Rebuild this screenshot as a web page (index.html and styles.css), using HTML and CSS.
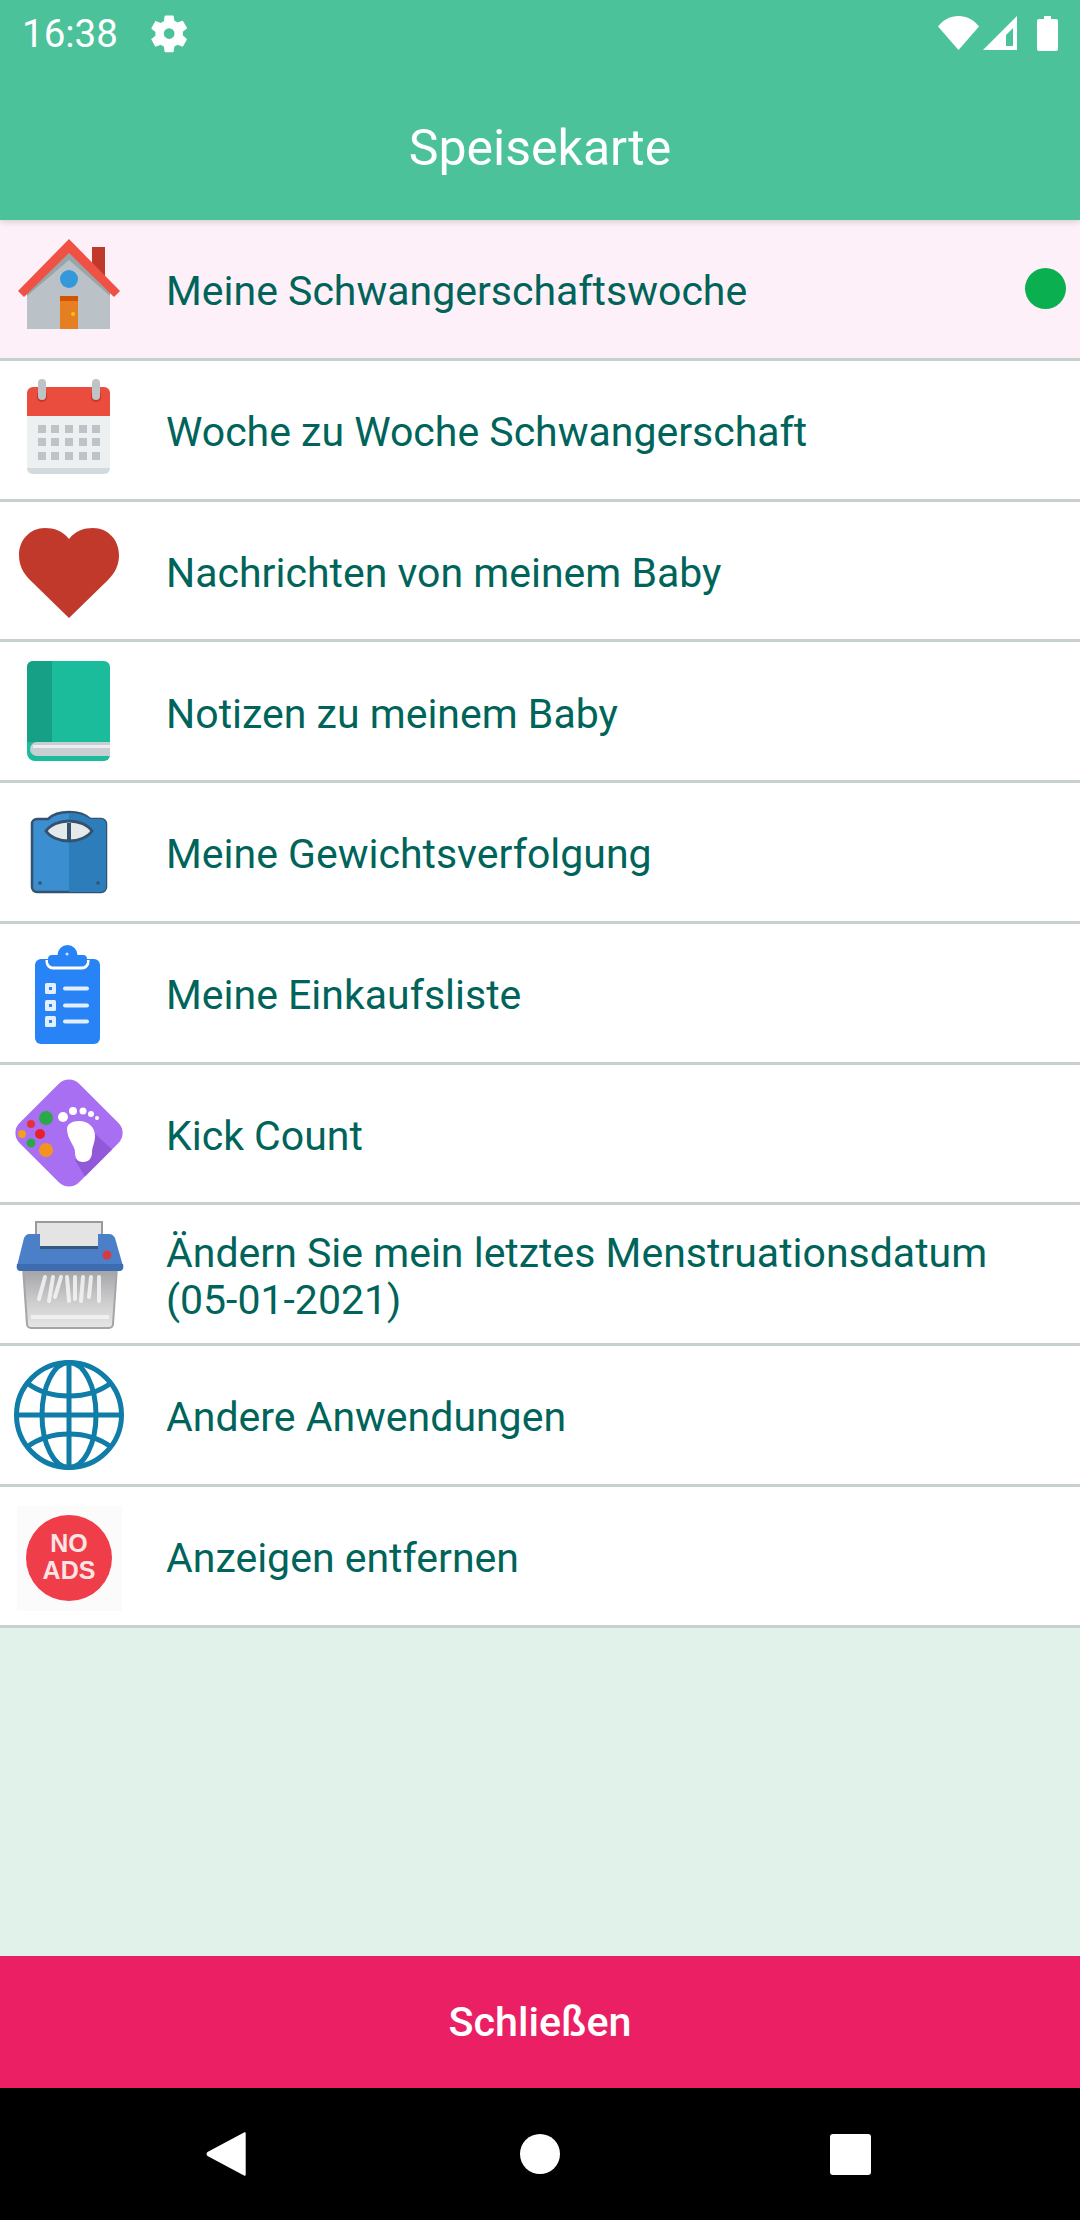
FILE: index.html
```html
<!DOCTYPE html>
<html lang="de">
<head>
<meta charset="utf-8">
<title>Speisekarte</title>
<link rel="stylesheet" href="styles.css">
</head>
<body>
<div class="screen">
  <header class="appbar">
    <div class="status">
      <div class="status-left">
        <span class="clock">16:38</span>
        <svg class="gear" viewBox="0 0 24 24"><path fill="#fff" fill-rule="evenodd" d="M19.400 13c.04-.3.06-.65.06-1s-.02-.7-.07-1l2.160-1.700c.2-.15.25-.42.12-.64l-2.050-3.550c-.12-.22-.38-.3-.62-.22l-2.550 1.030c-.53-.4-1.100-.74-1.730-1l-.38-2.700A.5.5 0 0 0 13.840 2H9.760a.5.5 0 0 0-.5.42l-.38 2.700c-.63.26-1.200.6-1.730 1L4.600 5.100c-.24-.08-.5 0-.62.22L1.930 8.870c-.13.22-.07.49.12.64L4.200 11.200c-.05.3-.08.66-.08 1s.02.7.07 1l-2.160 1.700c-.2.15-.25.42-.12.64l2.050 3.550c.12.22.38.3.62.22l2.550-1.030c.53.4 1.100.74 1.730 1l.38 2.700c.05.25.25.42.5.42h4.080c.25 0 .46-.17.5-.42l.38-2.700c.63-.26 1.200-.6 1.730-1l2.550 1.030c.24.08.5 0 .62-.22l2.050-3.550c.13-.22.07-.49-.12-.64L19.400 13zM11.800 15a3 3 0 1 1 0-6 3 3 0 0 1 0 6z"/></svg>
      </div>
      <div class="status-right">
        <svg class="wifi" viewBox="0 0 41 34"><path fill="#fff" d="M20.500 34 0 10.500C5 4 12.500 0 20.500 0S36 4 41 10.500z"/></svg>
        <svg class="signal" viewBox="0 0 34 34"><path fill="#fff" fill-rule="evenodd" d="M34 0v34H0zM30 12l-7 7v11h7z"/></svg>
        <svg class="battery" viewBox="0 0 21 35"><path fill="#fff" d="M7 0h7v3h5a2 2 0 0 1 2 2v28a2 2 0 0 1-2 2H2a2 2 0 0 1-2-2V5a2 2 0 0 1 2-2h5z"/></svg>
      </div>
    </div>
    <h1 class="title">Speisekarte</h1>
  </header>

  <ul class="menu">
    <li class="row row-active">
      <svg class="icon" viewBox="0 0 120 120">
        <rect x="83" y="18" width="13" height="32" fill="#c0392b"/>
        <path d="M18 58 60 20l41 38v42H18z" fill="#bac2c8"/>
        <path d="M18 60 60 24l41 36v7L60 31 18 67z" fill="#98a6a9"/>
        <path d="M9 62 60 10l51 52-6 6-45-44-45 44z" fill="#ef5245"/>
        <circle cx="60" cy="50" r="9" fill="#3498db"/>
        <rect x="51" y="67" width="18" height="33" fill="#e67e22"/>
        <rect x="51" y="67" width="18" height="5" fill="#d35400"/>
        <circle cx="64" cy="85" r="2" fill="#f1c40f"/>
      </svg>
      <span class="label">Meine Schwangerschaftswoche</span>
      <span class="dot"></span>
    </li>
    <li class="row">
      <svg class="icon" viewBox="0 0 120 120">
        <path d="M18 44h83v54a6 6 0 0 1-6 6H24a6 6 0 0 1-6-6z" fill="#ecf0f1"/>
        <path d="M18 98h83a6 6 0 0 1-6 6H24a6 6 0 0 1-6-6z" fill="#d3dadd"/>
        <path d="M24 17h71a6 6 0 0 1 6 6v23H18V23a6 6 0 0 1 6-6z" fill="#ea4c3e"/>
        <g fill="#c0392b"><rect x="28" y="20" width="10" height="12" rx="5"/><rect x="82" y="20" width="10" height="12" rx="5"/></g>
        <g fill="#bdc3c7"><rect x="29" y="9" width="8" height="21" rx="4"/><rect x="83" y="9" width="8" height="21" rx="4"/></g>
        <g fill="#bdc3c7">
          <rect x="29" y="55" width="8" height="8"/><rect x="42" y="55" width="8" height="8"/><rect x="56" y="55" width="8" height="8"/><rect x="70" y="55" width="8" height="8"/><rect x="83" y="55" width="8" height="8"/>
          <rect x="29" y="68" width="8" height="8"/><rect x="42" y="68" width="8" height="8"/><rect x="56" y="68" width="8" height="8"/><rect x="70" y="68" width="8" height="8"/><rect x="83" y="68" width="8" height="8"/>
          <rect x="29" y="82" width="8" height="8"/><rect x="42" y="82" width="8" height="8"/><rect x="56" y="82" width="8" height="8"/><rect x="70" y="82" width="8" height="8"/><rect x="83" y="82" width="8" height="8"/>
        </g>
      </svg>
      <span class="label">Woche zu Woche Schwangerschaft</span>
    </li>
    <li class="row">
      <svg class="icon" viewBox="0 0 120 120">
        <path d="M60 29C54 21 45 18 36 18 21 18 10 30 10 45c0 10 4 18 11 25l39 38 39-38c7-7 11-15 11-25 0-15-11-27-26-27-9 0-18 3-24 11z" fill="#c0392b"/>
      </svg>
      <span class="label">Nachrichten von meinem Baby</span>
    </li>
    <li class="row">
      <svg class="icon" viewBox="0 0 120 120">
        <path d="M24 10h71a6 6 0 0 1 6 6v88a6 6 0 0 1-6 6H26a8 8 0 0 1-8-8V16a6 6 0 0 1 6-6z" fill="#1abc9c"/>
        <path d="M24 10h19v81H18V16a6 6 0 0 1 6-6z" fill="#16a085"/>
        <path d="M28 91h73v14H28a7 7 0 0 1 0-14z" fill="#c9ced2"/>
        <path d="M24 94h77v3H24z" fill="#eceff1"/>
      </svg>
      <span class="label">Notizen zu meinem Baby</span>
    </li>
    <li class="row">
      <svg class="icon" viewBox="0 0 120 120">
        <path d="M28 27h11c5-5 13-7 21-7s16 2 21 7h11a5 5 0 0 1 5 5v63a5 5 0 0 1-5 5H28a5 5 0 0 1-5-5V32a5 5 0 0 1 5-5z" fill="#3b8ed0" stroke="#34526e" stroke-width="2.500"/>
        <path d="M60 21c8 0 16 2 21 6h11a5 5 0 0 1 5 5v63a5 5 0 0 1-5 5H60z" fill="#2c7db9"/>
        <path d="M37 39c4-6 13-10 23-10s19 4 23 10c-4 6-13 10-23 10s-19-4-23-10z" fill="#e6e9ea" stroke="#34526e" stroke-width="3"/>
        <rect x="58" y="31" width="4" height="17" fill="#34526e"/>
        <circle cx="31" cy="91" r="1.800" fill="#34526e"/>
        <circle cx="89" cy="91" r="1.800" fill="#34526e"/>
      </svg>
      <span class="label">Meine Gewichtsverfolgung</span>
    </li>
    <li class="row">
      <svg class="icon" viewBox="0 0 120 120">
        <rect x="26" y="26" width="65" height="85" rx="6" fill="#2783f6"/>
        <path d="M38 27v2a6 6 0 0 0 6 6h29a6 6 0 0 0 6-6v-2" fill="none" stroke="#fff" stroke-width="3"/>
        <path d="M41 32a4 4 0 0 1-2-4v-2a4 4 0 0 1 4-4h5.500a10 10 0 0 1 20 0H74a4 4 0 0 1 4 4v2a4 4 0 0 1-2 4z" fill="#2783f6"/>
        <circle cx="58" cy="21" r="1.500" fill="#cfe3fd"/>
        <g fill="#e4effe">
          <rect x="36" y="50" width="11" height="11" rx="1.500"/><rect x="36" y="67" width="11" height="11" rx="1.500"/><rect x="36" y="83" width="11" height="11" rx="1.500"/>
          <rect x="54" y="53.500" width="26" height="4" rx="2"/><rect x="54" y="70.500" width="26" height="4" rx="2"/><rect x="54" y="86.500" width="26" height="4" rx="2"/>
        </g>
        <g fill="#2783f6"><rect x="40" y="54" width="3" height="3"/><rect x="40" y="71" width="3" height="3"/><rect x="40" y="87" width="3" height="3"/></g>
      </svg>
      <span class="label">Meine Einkaufsliste</span>
    </li>
    <li class="row">
      <svg class="icon" viewBox="0 0 120 120">
        <defs>
          <clipPath id="diamond"><rect x="18" y="18" width="84" height="84" rx="14" transform="rotate(45 60 60)"/></clipPath>
        </defs>
        <rect x="18" y="18" width="84" height="84" rx="14" transform="rotate(45 60 60)" fill="#a86ff2"/>
        <path d="M86 61 106 79 78 107 66 87z" fill="#9158d8" clip-path="url(#diamond)"/>
        <g fill="#fff">
          <circle cx="54" cy="44" r="5"/><circle cx="64" cy="38" r="4"/><circle cx="74" cy="38" r="3.500"/><circle cx="82" cy="41" r="3"/><circle cx="88" cy="45" r="2"/>
          <path d="M58 56c0-5 5-8 12-8 9 0 16 6 16 15 0 7-3 11-3 16 0 6-3 10-9 10-6 0-8-4-8-10 0-6-8-13-8-23z"/>
        </g>
        <circle cx="37" cy="45" r="7" fill="#2aa84a"/>
        <circle cx="22" cy="51" r="4" fill="#e8303a"/>
        <circle cx="13" cy="61" r="4" fill="#f2a01e"/>
        <circle cx="31" cy="61" r="5" fill="#e8202a"/>
        <circle cx="22" cy="70" r="4.500" fill="#2aa84a"/>
        <circle cx="37" cy="77" r="7" fill="#f2951e"/>
      </svg>
      <span class="label">Kick Count</span>
    </li>
    <li class="row">
      <svg class="icon" viewBox="0 0 120 120">
        <defs>
          <linearGradient id="bin" x1="0" y1="0" x2="0" y2="1"><stop offset="0" stop-color="#9fa0a3"/><stop offset=".6" stop-color="#cfcfd0"/><stop offset="1" stop-color="#e6e6e6"/></linearGradient>
        </defs>
        <g transform="translate(0 3)">
          <path d="M14 50h94l-4 57a4 4 0 0 1-4 4H22a4 4 0 0 1-4-4z" fill="url(#bin)" stroke="#a3a5a8" stroke-width="2"/>
          <path d="M22 100h78" stroke="#f0f0f0" stroke-width="4"/>
          <g stroke="#f4f4f4" stroke-width="4" fill="none" opacity=".85" stroke-linecap="round">
            <path d="M36 60 30 82M44 60 40 84M52 60 46 80M58 60 60 84M66 60 66 82M74 60 72 84M82 60 80 80M90 60 90 84"/>
          </g>
          <rect x="27" y="5" width="66" height="30" fill="#e4e4e4" stroke="#9a9a9a" stroke-width="2"/>
          <path d="M20 17h11v14h58V17h11c3 0 5 2 6 4l8 28c1 3-1 5-4 5H12c-3 0-5-2-4-5l7-28c1-2 3-4 5-4z" fill="#4b80c9"/>
          <path d="M8 47c-1 4 1 7 4 7h98c3 0 5-3 4-7H8z" fill="#3d6db0"/>
          <rect x="31" y="29" width="58" height="3" fill="#33597f"/>
          <circle cx="98" cy="38" r="4.500" fill="#d93a42"/>
        </g>
      </svg>
      <span class="label">Ändern Sie mein letztes Menstruationsdatum (05-01-2021)</span>
    </li>
    <li class="row">
      <svg class="icon" viewBox="0 0 120 120">
        <g fill="none" stroke="#0f7da8" stroke-width="5">
          <circle cx="60" cy="60" r="52.500"/>
          <ellipse cx="60" cy="60" rx="27" ry="52.500"/>
          <path d="M60 8v104M8 60h104"/>
          <path d="M18 28c12 9 26 13 42 13s30-4 42-13"/>
          <path d="M18 92c12-9 26-13 42-13s30 4 42 13"/>
        </g>
      </svg>
      <span class="label">Andere Anwendungen</span>
    </li>
    <li class="row">
      <svg class="icon" viewBox="0 0 120 120">
        <rect x="8" y="10" width="105" height="105" fill="#fbfbfb"/>
        <circle cx="60" cy="62" r="43" fill="#ef3d49"/>
        <text class="ads-text" x="60" y="56" text-anchor="middle">NO</text>
        <text class="ads-text" x="60" y="83" text-anchor="middle">ADS</text>
      </svg>
      <span class="label">Anzeigen entfernen</span>
    </li>
  </ul>

  <div class="spacer"></div>
  <div class="close">Schließen</div>

  <nav class="navbar">
    <svg class="nav-back" viewBox="0 0 40 46"><path fill="#fff" d="M38 1.500c.8-.6 1.700 0 1.700 1v41c0 1-.9 1.600-1.700 1L1.500 25c-1.300-1-1.300-3 0-4z"/></svg>
    <span class="nav-home"></span>
    <span class="nav-recent"></span>
  </nav>
</div>
</body>
</html>
```
FILE: styles.css
```css
* { box-sizing: border-box; }
html, body { margin: 0; padding: 0; }
body { width: 1080px; height: 2220px; font-family: Roboto, "Noto Sans", sans-serif; overflow: hidden; }
.screen { width: 1080px; height: 2220px; display: flex; flex-direction: column; background: #e0f2ea; }

.appbar { height: 220px; flex: none; background: #4cc29a; color: #fff; display: flex; flex-direction: column; box-shadow: 0 2px 6px rgba(0,0,0,.15); position: relative; z-index: 1; }
.status { height: 66px; padding: 0 22px 0 22px; display: flex; justify-content: space-between; align-items: center; }
.status-left { display: flex; align-items: center; gap: 30px; }
.clock { font-size: 38.500px; }
.gear { width: 43px; height: 43px; display: block; }
.status-right { display: flex; align-items: center; gap: 4px; }
.wifi { width: 41px; height: 34px; display: block; }
.signal { width: 34px; height: 34px; display: block; }
.battery { width: 21px; height: 35px; display: block; margin-left: 16px; }
.title { margin: 0; font-weight: 400; font-size: 50px; text-align: center; line-height: 64px; padding-top: 50px; }

.menu { list-style: none; margin: 0; padding: 0; flex: none; }
.row { height: 140.750px; background: #fff; border-bottom: 3px solid #c6d1cd; display: flex; align-items: center; padding-left: 9px; }
.row-active { background: #fdf0f8; }
.icon { width: 120px; height: 120px; flex: none; display: block; }
.label { margin-left: 37px; flex: 1; font-size: 41px; line-height: 47px; color: #00645a; padding-top: 6px; padding-right: 60px; }
.dot { width: 41px; height: 41px; border-radius: 50%; background: #0ab04f; margin-right: 14px; flex: none; }
.ads-text { font-family: "Liberation Sans", sans-serif; font-weight: 700; font-size: 25px; fill: #fbe4e4; }

.spacer { flex: 1; }
.close { height: 132px; flex: none; background: #eb2064; color: #fff; font-weight: 500; font-size: 41.250px; display: flex; align-items: center; justify-content: center; }

.navbar { height: 132px; flex: none; background: #000; display: flex; align-items: center; position: relative; padding-left: 206px; }
.nav-back { width: 40px; height: 46px; display: block; }
.nav-home { width: 40px; height: 40px; border-radius: 50%; background: #fff; margin-left: 274px; }
.nav-recent { width: 41px; height: 41px; border-radius: 3px; background: #fff; margin-left: 270px; }
```
